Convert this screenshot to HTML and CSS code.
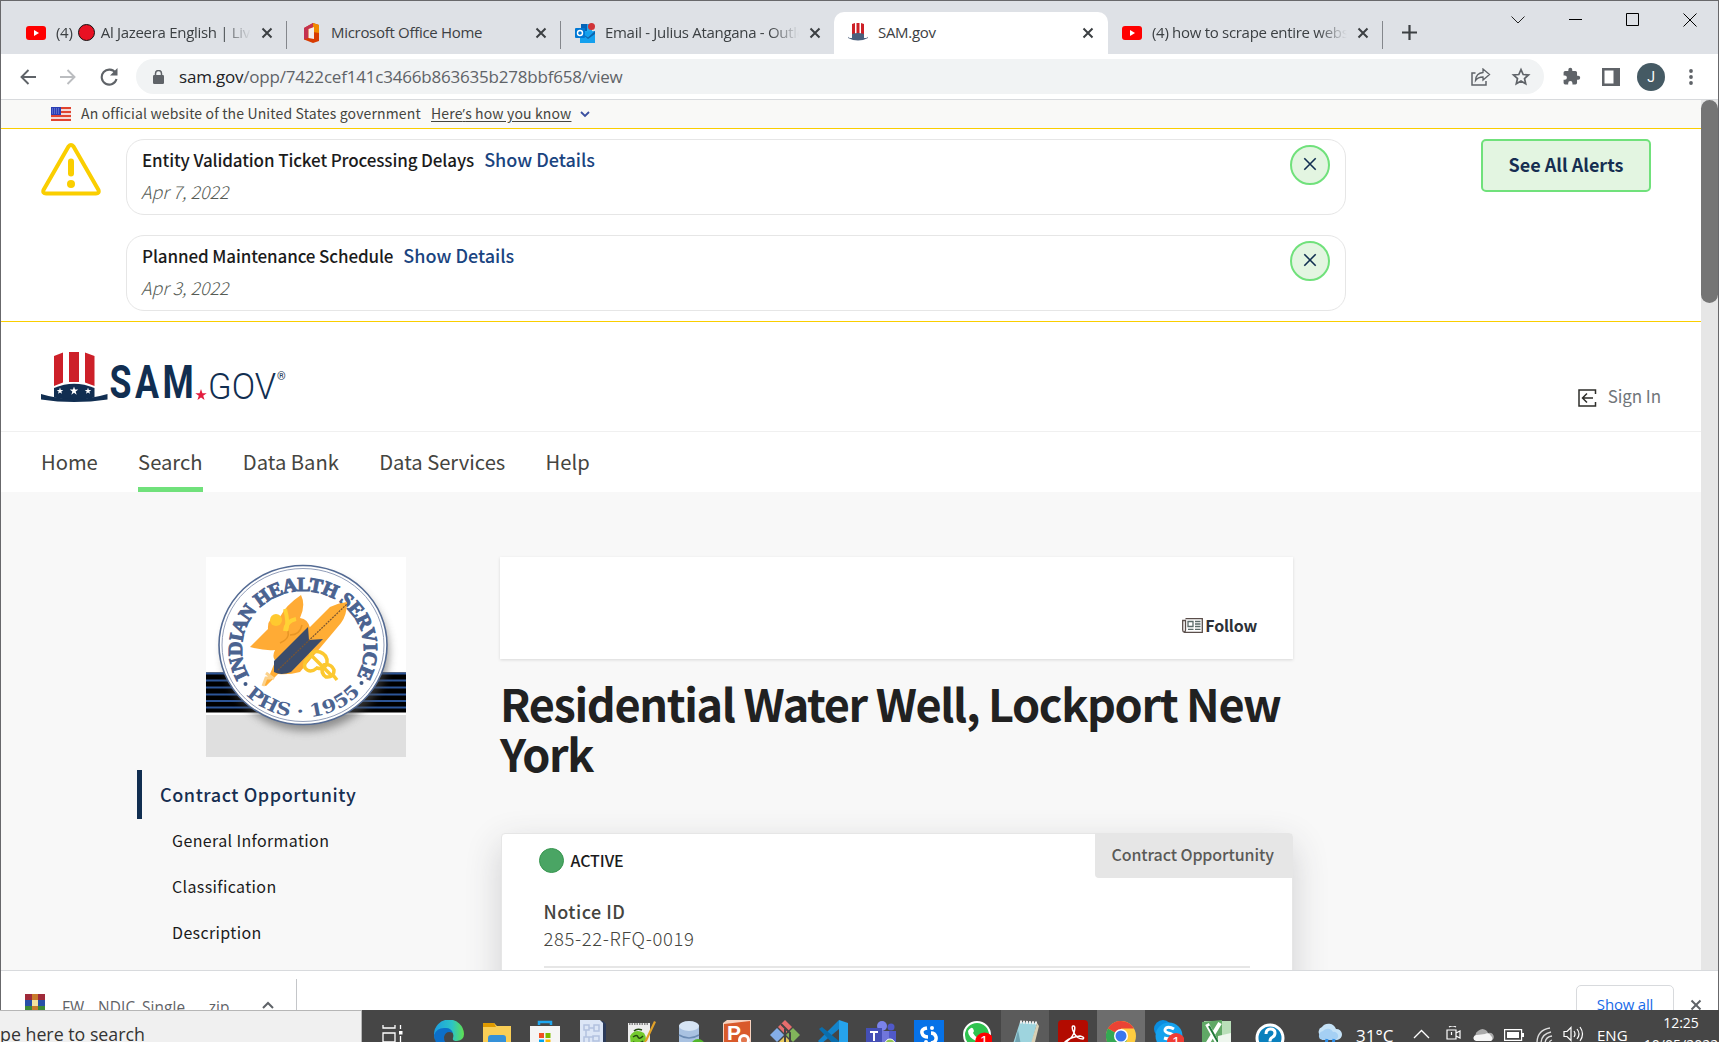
FILE: index.html
```html
<!DOCTYPE html>
<html lang="en">
<head>
<meta charset="utf-8">
<title>SAM.gov</title>
<link rel="stylesheet" href="styles.css">
</head>
<body>
<svg class="defs" width="0" height="0">
  <symbol id="x" viewBox="0 0 12 12"><path d="M1.5 1.5l9 9M10.5 1.5l-9 9" fill="none" stroke="currentColor" stroke-width="2"/></symbol>
  <symbol id="thinx" viewBox="0 0 14 14"><path d="M1.3 1.3l11.4 11.4M12.7 1.3L1.3 12.7" fill="none" stroke="currentColor" stroke-width="1.6"/></symbol>
  <symbol id="youtube" viewBox="0 0 20 14"><rect width="20" height="14" rx="3" fill="#f00"/><path d="M8 4l5 3-5 3z" fill="#fff"/></symbol>
  <symbol id="star" viewBox="-10 -10 20 20"><path d="M0-10l2.35 6.9h7.2L3.7 1.2l2.2 7-5.9-4.2-5.9 4.2 2.2-7-5.85-4.3h7.2z"/></symbol>
</svg>
<div class="window">
  <header class="tabs">
    <div class="tab first">
      <svg class="fav" width="20" height="14"><use href="#youtube"/></svg>
      <span class="tab-title faded">(4) <i class="live"></i> Al Jazeera English | Live</span>
      <svg class="close" width="12" height="12"><use href="#x"/></svg>
    </div>
    <div class="tab">
      <svg class="fav" width="20" height="20" viewBox="0 0 20 20"><path d="M12 0l6 2v16l-6 2-9-3.5V5z" fill="#d83b01"/><path d="M12 0l6 2v8l-6-1z" fill="#f08a00"/><path d="M3 5l9-5v4L7 6v9l-4 1.500z" fill="#c43150"/><path d="M7.500 6l5.500-2v12l-5.500-1z" fill="#f3eeee"/></svg>
      <span class="tab-title">Microsoft Office Home</span>
      <svg class="close" width="12" height="12"><use href="#x"/></svg>
    </div>
    <div class="tab">
      <svg class="fav" width="20" height="20" viewBox="0 0 20 20"><path d="M6 1h11v13H6z" fill="#28a8ea"/><path d="M6 1h6v7H6z" fill="#0364b8"/><path d="M5 9l15-1v12H5z" fill="#14a0ee"/><path d="M5 9l8 5.500L20 8v3l-7 5z" fill="#0a2767" opacity=".5"/><rect y="5" width="10" height="10" rx="1" fill="#0078d4"/><circle cx="5" cy="10" r="2.500" fill="none" stroke="#fff" stroke-width="1.400"/><circle cx="16.500" cy="3.500" r="3.500" fill="#d13438"/></svg>
      <span class="tab-title faded">Email - Julius Atangana - Outlook</span>
      <svg class="close" width="12" height="12"><use href="#x"/></svg>
    </div>
    <div class="tab active">
      <svg class="fav hat" width="20" height="18" viewBox="0 0 20 18"><path d="M4 1l3-1v11H4zM8.500 0h3v11h-3zM13 0l3 1v10h-3z" fill="#cd2026"/><path d="M4 11q6-2 12 0v4q4 0 4-1.500v1.500q-10 5-20 0v-1.500Q0 15 4 15z" fill="#4a5f7c"/></svg>
      <span class="tab-title">SAM.gov</span>
      <svg class="close" width="12" height="12"><use href="#x"/></svg>
    </div>
    <div class="tab last">
      <svg class="fav" width="20" height="14"><use href="#youtube"/></svg>
      <span class="tab-title faded">(4) how to scrape entire website</span>
      <svg class="close" width="12" height="12"><use href="#x"/></svg>
    </div>
    <svg class="plus" width="15" height="15" viewBox="0 0 15 15"><path d="M7.500 0v15M0 7.500h15" stroke="#3c4043" stroke-width="2.200"/></svg>
    <div class="controls">
      <svg width="14" height="8" viewBox="0 0 14 8"><path d="M.5.5L7 7 13.500.5" fill="none" stroke="#222"/></svg>
      <svg width="13" height="13" viewBox="0 0 13 13"><path d="M0 6.500h13" stroke="#000"/></svg>
      <svg width="13" height="13" viewBox="0 0 13 13"><path d="M.5.5h12v12H.5z" fill="none" stroke="#000"/></svg>
      <svg width="14" height="14" viewBox="0 0 14 14"><path d="M.5.5l13 13M13.500.5l-13 13" stroke="#000"/></svg>
    </div>
  </header>

  <div class="toolbar">
    <div class="nav-icons">
      <svg width="16" height="16" viewBox="0 0 16 16"><path d="M16 8H1.500M8.500 1l-7 7 7 7" fill="none" stroke="#5f6368" stroke-width="1.900"/></svg>
      <svg width="16" height="16" viewBox="0 0 16 16"><path d="M0 8h14.500M7.500 1l7 7-7 7" fill="none" stroke="#bbbdc0" stroke-width="1.900"/></svg>
      <svg width="18" height="18" viewBox="0 0 18 18"><path d="M15.500 5A7.500 7.500 0 1 0 16.500 11" fill="none" stroke="#5f6368" stroke-width="2.100"/><path d="M17.500 0v7.500H10z" fill="#5f6368"/></svg>
    </div>
    <div class="address">
      <svg width="11" height="14" viewBox="0 0 11 14"><rect y="5" width="11" height="9" rx="1.200" fill="#5f6368"/><path d="M2.500 6V3.500a3 3 0 0 1 6 0V6" fill="none" stroke="#5f6368" stroke-width="1.500"/></svg>
      <span class="url"><b>sam.gov</b>/opp/7422cef141c3466b863635b278bbf658/view</span>
      <svg class="share" width="20" height="18" viewBox="0 0 20 18"><path d="M4.500 5H1v12h14v-4" fill="none" stroke="#5f6368" stroke-width="1.500"/><path d="M12 1l6.500 5.500L12 12V9Q7 9 4.500 12.500 5 5 12 4.500z" fill="none" stroke="#5f6368" stroke-width="1.300"/></svg>
      <svg width="20" height="20" viewBox="-10 -10 20 20"><path d="M0-7.400l2.200 4.900 5.300.5-4 3.500 1.200 5.300L0 4-4.700 6.800l1.200-5.300-4-3.500 5.300-.5z" fill="none" stroke="#5f6368" stroke-width="1.700"/></svg>
    </div>
    <div class="actions">
      <svg class="ext" width="19" height="19" viewBox="0 0 24 24"><path d="M20.500 11H19V7a2 2 0 0 0-2-2h-4V3.500a2.500 2.500 0 0 0-5 0V5H4a2 2 0 0 0-2 2v3.800h1.500a2.700 2.700 0 0 1 0 5.400H2V20a2 2 0 0 0 2 2h3.800v-1.500a2.700 2.700 0 0 1 5.400 0V22H17a2 2 0 0 0 2-2v-4h1.500a2.500 2.500 0 0 0 0-5z" fill="#5f6368"/></svg>
      <svg class="panel" width="18" height="18" viewBox="0 0 18 18"><path d="M0 0h18v18H0zM2.500 2.500v13h9v-13z" fill="#5f6368" fill-rule="evenodd"/></svg>
      <span class="avatar">J</span>
      <svg class="dots" width="4" height="16" viewBox="0 0 4 16"><circle cx="2" cy="2" r="1.900" fill="#5f6368"/><circle cx="2" cy="8" r="1.900" fill="#5f6368"/><circle cx="2" cy="14" r="1.900" fill="#5f6368"/></svg>
    </div>
  </div>

  <div class="viewport">
    <div class="page">
      <div class="gov">
        <svg width="20" height="14" viewBox="0 0 20 14"><rect width="20" height="14" fill="#f6d9d5"/><path d="M0 1h20M0 5h20M0 9h20M0 13h20" stroke="#e0442f" stroke-width="2"/><rect width="10" height="8" fill="#2b3fb5"/><path d="M1 2h8M1 4h8M1 6h8" stroke="#a9b4ec" stroke-width=".8" stroke-dasharray="1 1"/></svg>
        <span class="gov-text">An official website of the United States government</span>
        <a class="gov-link">Here<span class="apos">’</span>s how you know</a>
        <svg width="10" height="7" viewBox="0 0 10 7"><path d="M1 1l4 4 4-4" fill="none" stroke="#3a4fa0" stroke-width="1.800"/></svg>
      </div>
      <section class="alerts">
        <svg class="warn" width="60" height="53" viewBox="0 0 60 53"><path d="M27.500 3.500Q30 .5 32.500 3.500L57.500 47q1 3.500-2.500 3.500H5Q1.500 50.500 2.500 47z" fill="none" stroke="#face00" stroke-width="4" stroke-linejoin="round"/><path d="M30 18.500v12" stroke="#face00" stroke-width="6" stroke-linecap="round"/><circle cx="30" cy="41" r="4" fill="#face00"/></svg>
        <div class="alert-list">
          <article class="alert">
            <div><p class="alert-title"><span>Entity Validation Ticket Processing Delays</span><a>Show Details</a></p><p class="date">Apr 7, 2022</p></div>
            <span class="dismiss"><svg width="14" height="14"><use href="#thinx"/></svg></span>
          </article>
          <article class="alert">
            <div><p class="alert-title"><span>Planned Maintenance Schedule</span><a>Show Details</a></p><p class="date">Apr 3, 2022</p></div>
            <span class="dismiss"><svg width="14" height="14"><use href="#thinx"/></svg></span>
          </article>
        </div>
        <a class="see-all">See All Alerts</a>
      </section>
      <div class="brand">
        <svg class="logo" width="248" height="52" viewBox="0 0 248 52">
          <path d="M13 4l9-3.500v30L13 34zM28 0h10v30H28zM44 .5L53.500 4v30L44 30.500z" fill="#cd2029"/>
          <path d="M13 36q20-8.500 40.500 0v9.500Q33 50 13 45.500z" fill="#112e51"/>
          <path d="M0 42q33 10 66.500 0v5.500q-33.500 5-66.500 0z" fill="#112e51"/>
          <g fill="#fff"><use href="#star" x="15.500" y="35.500" width="7" height="7"/><use href="#star" x="28.500" y="34.500" width="9" height="9"/><use href="#star" x="43.500" y="35.500" width="7" height="7"/></g>
          <text class="logo-bold" transform="translate(68.500 46) scale(.76 1)" textLength="111">SAM</text>
          <use href="#star" x="154" y="37" width="12" height="12" fill="#e31c3d"/>
          <text class="logo-thin" x="167" y="46.500" textLength="68" lengthAdjust="spacingAndGlyphs">GOV</text>
          <text class="logo-r" x="236" y="28">®</text>
        </svg>
        <a class="sign-in"><svg width="19" height="18" viewBox="0 0 19 18"><path d="M17.500 5V1H1v16h16.500v-4M15 9H5M9 4.500L4.500 9 9 13.500" fill="none" stroke="#2e2e2a" stroke-width="1.500"/></svg><span>Sign In</span></a>
      </div>
      <nav class="menu">
        <a>Home</a><a class="current">Search</a><a>Data Bank</a><a>Data Services</a><a>Help</a>
      </nav>
      <main class="content">
        <aside class="side">
          <svg class="seal" width="200" height="200" viewBox="0 0 200 200">
            <defs>
              <path id="arc-top" d="M43 119A61 58 0 1 1 151 119"/>
              <path id="arc-bottom" d="M40 138A78 73 0 0 0 158 132"/>
              <filter id="soft" x="-20%" y="-20%" width="140%" height="140%"><feGaussianBlur stdDeviation="4"/></filter>
            </defs>
            <rect width="200" height="200" fill="#fff"/>
            <rect y="115.500" width="200" height="40" fill="#000"/>
            <path d="M0 116.500h200M0 123.500h200M0 130.500h200M0 137.500h200M0 144h200M0 150.500h200" stroke="#2c5597" stroke-width="2"/>
            <rect y="158" width="200" height="42" fill="#dfdfdf"/>
            <ellipse cx="100" cy="95" rx="83" ry="79" fill="#555" opacity=".6" filter="url(#soft)"/>
            <ellipse cx="97" cy="88" rx="84" ry="79.500" fill="#fff" stroke="#536a93" stroke-width="1.600"/>
            <ellipse cx="97" cy="88" rx="81" ry="76.500" fill="none" stroke="#8492b0" stroke-width=".9"/>
            <text class="seal-top"><textPath href="#arc-top">INDIAN HEALTH SERVICE</textPath></text>
            <text class="seal-bottom"><textPath href="#arc-bottom" textLength="127" lengthAdjust="spacingAndGlyphs">PHS · 1955</textPath></text>
            <circle cx="39.500" cy="127" r="2" fill="#405a87"/><circle cx="155.500" cy="126" r="2" fill="#405a87"/>
            <path d="M44 90Q54 80 62 72q-1-13 12-12Q80 48 95 38q5 10-1 23 8 1 10 10l-33 34q-6-4-2-12Q58 94 44 90z" fill="#ffab35"/>
            <circle cx="70" cy="63" r="6" fill="#ffc92f"/>
            <path d="M79 52q4 14 1 22M90 62q-10 2-11 12" fill="none" stroke="#ffd235" stroke-width="4"/>
            <path d="M74 86q10-4 8-12M84 78q10 0 12-10" fill="none" stroke="#e79525" stroke-width="1.500"/>
            <path d="M69 105L124 50q8-4 17-5 0 13-6 21l-41 49q-11 3-22 2l-12 12-3-1 7-11z" fill="#ffad34"/>
            <path d="M68 104l34-34 1 13 14-1-32 33q-10 4-17 0z" fill="#3b4c6b"/>
            <path d="M72 113L141 47" stroke="#7a5530" stroke-width="1.200" stroke-dasharray="2 1"/>
            <path d="M99 111q-2-7 5-11 2-7 10-5 8 3 7 11-2 7-10 5-7 6-12 0zM117 108q8-2 11 5 0 8-8 7-6-4-3-12M127 118l4 5M105 98l20 20" fill="none" stroke="#fcc831" stroke-width="3.500"/>
            <path d="M57 129l3-8h5M60 116l8 6" fill="none" stroke="#fcd28b" stroke-width="3"/>
          </svg>
          <a class="side-main">Contract Opportunity</a>
          <a class="side-link">General Information</a>
          <a class="side-link">Classification</a>
          <a class="side-link">Description</a>
        </aside>
        <section class="main">
          <div class="follow-bar"><a class="follow"><svg width="21" height="15" viewBox="0 0 21 15"><path d="M3.500.7h16.800v13.600H2.500Q.7 14 .7 12V2.500h2.800V12q0 2-1.500 2" fill="none" stroke="#5a4e4a" stroke-width="1.300"/><path d="M6 3.500h5v5H6zM13 3.500h5.500M13 6h5.500M13 8.500h5.500M6 11.300h5.500M13 11.300h5.500" fill="none" stroke="#5a6a68" stroke-width="1.300"/></svg><span>Follow</span></a></div>
          <h1>Residential Water Well, Lockport New York</h1>
          <div class="card">
            <div class="card-top"><span class="status"><i></i><b>ACTIVE</b></span><span class="tag">Contract Opportunity</span></div>
            <dl><dt>Notice ID</dt><dd>285-22-RFQ-0019</dd></dl>
          </div>
        </section>
      </main>
    </div>
    <div class="scrollbar"><div class="thumb"></div></div>
  </div>

  <div class="downloads">
    <div class="file">
      <svg width="20" height="20" viewBox="0 0 20 20"><path d="M0 0h20v6H0z" fill="#a02a3a"/><path d="M0 6h20v6H0z" fill="#2850a8"/><path d="M0 12h20v6H0z" fill="#3d8a36"/><path d="M7 0h6v18H7z" fill="#c97b2c"/><path d="M7 6h6v6H7z" fill="#f3e3a0"/></svg>
      <span class="file-name">FW__NDIC_Single_....zip</span>
      <svg width="12" height="8" viewBox="0 0 12 8"><path d="M1 7l5-5 5 5" fill="none" stroke="#5f6368" stroke-width="2"/></svg>
    </div>
    <a class="show-all">Show all</a>
    <svg class="dl-close" width="12" height="12"><use href="#x"/></svg>
  </div>
</div>

<footer class="taskbar">
  <div class="search">pe here to search</div>
  <div class="view"><svg width="22" height="28" viewBox="0 0 22 28"><path d="M1 5v3h12V5M1 13h12v9H1zM1 27v-3h12v3M18.500 5v4M18.500 16v8" fill="none" stroke="#fff" stroke-width="1.300"/><path d="M17 11h3.500v3.500H17z" fill="#fff"/></svg></div>
  <div class="apps">
    <span><svg viewBox="0 0 30 30"><defs><linearGradient id="edge" x1="0" y1="0" x2="1" y2="0"><stop stop-color="#1b9de2"/><stop offset=".6" stop-color="#2cc3c6"/><stop offset="1" stop-color="#5fe04f"/></linearGradient></defs><path d="M0 15a15 15 0 0 1 30-1q0 6-7 7-5 0-4-3 2-7-6-7Q3 12 1 20z" fill="url(#edge)"/><path d="M0 15q3-8 12-7 5 0 7 5-7-3-9 4 0 8 9 12Q2 32 0 15z" fill="#0c6fc9"/></svg></span>
    <span><svg viewBox="0 0 30 30"><path d="M1 3h11l3 3h14v24H1z" fill="#f9ce56"/><path d="M1 3h11l2 4H1z" fill="#e09a00"/><path d="M6 30V18q0-3 3-3h12q3 0 3 3v12h-5v-8h-8v8z" fill="#3591d8"/></svg></span>
    <span><svg viewBox="0 0 30 30"><path d="M9 5V2h12v3" fill="none" stroke="#1fa7f0" stroke-width="2.500"/><path d="M0 6h30v24H0z" fill="#f5f5f5"/><path d="M9 13h5v5H9z" fill="#f25022"/><path d="M15.500 13h5v5h-5z" fill="#7fba00"/><path d="M9 19.500h5v5H9z" fill="#00a4ef"/><path d="M15.500 19.500h5v5h-5z" fill="#ffb900"/></svg></span>
    <span><svg viewBox="0 0 30 30"><path d="M3 1h22l3 3v26H3z" fill="#2b3a59"/><path d="M2 0h20l3 3v27H2z" fill="#dce6f6"/><path d="M6 5h5v5H6zM16 5h5v6h-5zM11 8h5M8 10v7h8M6 17h5v7H6zM15 16h6v5h-6z" fill="none" stroke="#b3c2e0" stroke-width="1.500"/><circle cx="25" cy="26" r="4" fill="#4a78bd"/></svg></span>
    <span><svg viewBox="0 0 30 30"><path d="M2 3h22v27H2z" fill="#eee"/><path d="M3 4h20" stroke="#888" stroke-width="2" stroke-dasharray="1.500 1"/><path d="M4 16q5-8 14-3 4 6 0 13H5z" fill="#73c92d"/><path d="M8 11q3-3 8-1M7 17q4-3 5 0t5-1M7 22q5 3 10-1" fill="none" stroke="#244812" stroke-width="1.500"/><path d="M28 1l-9 19-2 4 4-3 9-19z" fill="#e0a129"/></svg></span>
    <span><svg viewBox="0 0 30 30"><path d="M5 5v25h20V5z" fill="#a9c2e1"/><ellipse cx="15" cy="6" rx="10" ry="5" fill="#d7e5f4"/><path d="M5 15q10 6 20 0M5 24q10 6 20 0" fill="none" stroke="#6c8cb4" stroke-width="1.500"/><circle cx="24" cy="26" r="7" fill="#53b72b"/><path d="M22 22l6 4-6 4z" fill="#fff"/></svg></span>
    <span><svg viewBox="0 0 30 30"><path d="M5 0h24v30H1V3z" fill="#f7d2bf"/><path d="M2 4L28 1v29H2z" fill="#d95a2b"/><text class="ppt" x="5" y="20">P</text><circle cx="22" cy="20" r="6" fill="#fff"/><circle cx="22" cy="20" r="3" fill="#e2764d"/></svg></span>
    <span><svg viewBox="0 0 30 30"><path d="M15 0l7 7-7 7-7-7z" fill="#e86d6d"/><path d="M7 8l7 7-7 7-7-7z" fill="#84aee8"/><path d="M23 8l7 7-7 7-7-7z" fill="#82b45b"/><path d="M15 16l7 7-7 7-7-7z" fill="#e8c95a"/><path d="M11 4l9 9v9M15 9v13" fill="none" stroke="#444" stroke-width="2"/></svg></span>
    <span><svg viewBox="0 0 30 30"><path d="M21 0l9 3v24l-9 3z" fill="#26a3ec"/><path d="M21 9L3 24l-3-3L21 0z" fill="#1384cc"/><path d="M21 21L4 7 1 9l20 21z" fill="#0a6ead"/></svg></span>
    <span><svg viewBox="0 0 30 30"><circle cx="16" cy="6" r="5" fill="#7b83eb"/><circle cx="25" cy="7" r="3.500" fill="#5059c9"/><path d="M9 11h15v19H9z" fill="#7076db"/><path d="M23 11h7v15h-7z" fill="#5059c9"/><path d="M0 8h16v16H0z" fill="#444fb5"/><path d="M4 12h8M8 12v9" stroke="#fff" stroke-width="2"/><circle cx="24" cy="24" r="5" fill="#92c353" stroke="#fff"/></svg></span>
    <span><svg viewBox="0 0 30 30"><path d="M0 0h30v30H0z" fill="#0672e8"/><path d="M13 8q-6 1-5 5 1 4 6 4M17 23q6-1 5-6-1-4-5-4" fill="none" stroke="#fff" stroke-width="3.500"/><circle cx="18" cy="8" r="2" fill="#fff"/><circle cx="12" cy="22" r="2" fill="#fff"/></svg></span>
    <span><svg viewBox="0 0 30 30"><circle cx="15" cy="15" r="13" fill="#2fc34f" stroke="#fff" stroke-width="2"/><path d="M9 8q2-1 3 3l-1 2q2 4 5 5l2-2q4 2 3 3-2 4-7 2-8-4-8-10 1-2 3-3z" fill="#fff"/><circle cx="22.500" cy="22" r="9.500" fill="#f00"/><text class="badge" x="18" y="26">1</text></svg></span>
    <span class="open"><svg viewBox="0 0 30 30"><path d="M10 2l17 1-7 27H1z" fill="#9ed4de"/><path d="M10 2l17 1" stroke="#eee" stroke-width="3" stroke-dasharray="2 1"/><path d="M27 3l2 3-6 24h-4z" fill="#d9d0b5"/><path d="M8 10l-5 20h9z" fill="#6fa3b1"/></svg></span>
    <span><svg viewBox="0 0 30 30"><rect width="30" height="34" rx="4" fill="#b30b00"/><path d="M6 23q7-3 10-10 2-8-1-7-2 1 1 7 3 6 9 6 2-2-3-3-9 1-14 5-3 3-2 2z" fill="none" stroke="#fff" stroke-width="1.500"/></svg></span>
    <span class="focused"><svg viewBox="0 0 30 30"><circle cx="15" cy="16" r="15" fill="#ffcd40"/><path d="M15 16L2 8.500A15 15 0 0 1 28 8.500H15z" fill="#ea4335"/><path d="M2 8.500A15 15 0 0 0 15 31l6-11-6-4z" fill="#34a853"/><path d="M2 8.500Q7 1 15 1v8z" fill="#ea4335"/><circle cx="15" cy="16" r="7" fill="#fff"/><circle cx="15" cy="16" r="5.500" fill="#3a76ef"/></svg></span>
    <span><svg viewBox="0 0 30 30"><circle cx="9" cy="9" r="9" fill="#0a8de0"/><circle cx="15" cy="16" r="13.500" fill="#16a2ee"/><path d="M20 9q-5-3-8-1-3 3 2 5 6 1 5 4-3 3-9 1" fill="none" stroke="#fff" stroke-width="3"/><circle cx="22" cy="22" r="9" fill="#f03c34"/><text class="badge" x="18" y="27">1</text></svg></span>
    <span><svg viewBox="0 0 30 30"><path d="M2 1h27v29H2z" fill="#b9dfb9"/><path d="M0 2l20-2v30H0z" fill="#60a866"/><path d="M5 4l12 22M18 3L4 26" stroke="#fff" stroke-width="4"/><path d="M7 6l10 18" stroke="#207a39" stroke-width="2"/><path d="M16 16l13-3v17H16z" fill="#eef6ee"/></svg></span>
    <span class="help"><svg viewBox="0 0 30 30"><circle cx="15" cy="18" r="13" fill="#0a80bd" stroke="#fff" stroke-width="3"/><path d="M11 14q0-5 4.500-5t4.500 4q0 3-3 4.500-2 1-2 4" fill="none" stroke="#fff" stroke-width="3"/></svg></span>
  </div>
  <div class="tray">
    <svg class="weather" width="27" height="26" viewBox="0 0 27 26"><path d="M5 14a5 5 0 0 1 1-9 8 8 0 0 1 14 2 5 5 0 0 1 1 11H6z" fill="#c5e2f7"/><path d="M4 17a5 5 0 0 1 3-8 6 6 0 0 1 10 1 4 4 0 0 1 2 8H7z" fill="#a5d0f4"/><path d="M11 17l-1 5M18 17l-1 5" stroke="#2f8fe8" stroke-width="3"/></svg>
    <span class="temp">31°C</span>
    <svg class="up" width="17" height="10" viewBox="0 0 17 10"><path d="M1 9l7.500-7.500L16 9" fill="none" stroke="#fff" stroke-width="1.300"/></svg>
    <svg class="cam" width="15" height="15" viewBox="0 0 15 15"><path d="M3 1q3.500-2 7 0M1 4h9v9H1zM10 7l4-2v7l-4-2M5.500 6v3" fill="none" stroke="#fff" stroke-width="1.200"/></svg>
    <svg class="cloud" width="21" height="14" viewBox="0 0 21 14"><path d="M4 11a5 5 0 0 1 1-8 6 6 0 0 1 10 2 4 4 0 0 1 3 8z" fill="#aaa"/><path d="M3 13a3 3 0 0 1 1-6l8-1a4 4 0 0 1 6 2 3 3 0 0 1 0 5z" fill="#f5f5f5"/></svg>
    <svg class="battery" width="20" height="12" viewBox="0 0 20 12"><path d="M.6.6h17v10.800H.6z" fill="none" stroke="#fff" stroke-width="1.200"/><path d="M3 3h12v6H3zM18 4h2v4h-2z" fill="#fff"/></svg>
    <svg class="wifi" width="17" height="17" viewBox="0 0 17 17"><path d="M1 16Q1 3 14 1M5 17Q5 7 15 5M9 17q0-7 7-8M13 17q0-3 3-4" fill="none" stroke="#ddd" stroke-width="1.300"/></svg>
    <svg class="volume" width="22" height="16" viewBox="0 0 22 16"><path d="M1 5.500h3l4-4v13l-4-4H1zM11 5q2 3 0 6M14 3q4 5 0 10M17 1q5 7 0 14" fill="none" stroke="#fff" stroke-width="1.200"/></svg>
    <span class="lang">ENG</span>
    <span class="clock"><span>12:25</span><span>10/05/2022</span></span>
  </div>
</footer>
</body>
</html>
```
FILE: styles.css
```css
* { box-sizing: border-box; margin: 0; padding: 0; }
body { width: 1719px; height: 1042px; overflow: hidden; display: flex; flex-direction: column; background: #fff; font-family: "Noto Sans CJK SC", sans-serif; }
.defs { position: absolute; }
svg { display: block; flex: none; }
i { font-style: normal; }
span, a { white-space: nowrap; }

/* browser window */
.window { height: 1010px; flex: none; display: flex; flex-direction: column; border: 1px solid #68686b; border-bottom: 0; overflow: hidden; }
.tabs, .toolbar, .downloads, .taskbar { font-family: "Open Sans", sans-serif; }
.tabs { height: 53px; flex: none; display: flex; background: #dee1e6; padding: 11px 0 0 12px; }
.tab { width: 274px; height: 42px; flex: none; display: flex; align-items: center; padding: 0 14px 1px; color: #3c4043; font-size: 15px; letter-spacing: -.3px; position: relative; }
.tab::after { content: ""; position: absolute; right: 0; top: 9px; width: 1px; height: 28px; background: #84878c; }
.tab .fav { margin-right: 10px; }
.tab.first { padding-left: 13px; }
.tab.last { padding-left: 13px; }
.tab.active { background: #fff; border-radius: 10px 10px 0 0; margin: 0 1px 0 -1px; }
.tab.active .hat { margin-top: -2px; }
.tab.active::after, .tab:nth-child(3)::after { display: none; }
.tab-title { flex: 1; overflow: hidden; line-height: 26px; padding-bottom: 1px; }
.faded { -webkit-mask-image: linear-gradient(90deg, #000 85%, transparent); mask-image: linear-gradient(90deg, #000 85%, transparent); }
.close { color: #3c4043; margin-left: 10px; }
.live { display: inline-block; width: 17px; height: 17px; border-radius: 50%; background: #e81123; border: 1px solid #111; vertical-align: -3px; margin: 0 2px; }
.plus { margin: 13px 0 0 19px; }
.controls { display: flex; margin-left: auto; gap: 44px; height: 17px; align-items: center; padding: 0 21px 0 0; margin-top: -1px; }

.toolbar { height: 46px; flex: none; display: flex; border-bottom: 1px solid #d8dadd; align-items: center; padding: 0 0 0 19px; }
.nav-icons { display: flex; gap: 24px; width: 116px; align-items: center; }
.address { width: 1408px; height: 35px; border-radius: 18px; background: #f1f3f4; display: flex; align-items: center; padding: 0 13px 0 17px; }
.url { margin-left: 15px; flex: 1; color: #5f6368; font-size: 17px; letter-spacing: -.2px; line-height: 30px; }
.url b { font-weight: 400; color: #202124; }
.share { margin-right: 20px; }
.actions { display: flex; align-items: center; }
.ext { margin-left: 18px; }
.panel { margin-left: 21px; }
.dots { margin-left: 24px; }
.avatar { margin-left: 17px; width: 28px; height: 28px; border-radius: 50%; background: #455a64; color: #fff; text-align: center; font: 14px/28px Roboto, sans-serif; }

/* web page */
.viewport { height: 870px; flex: none; display: flex; }
.page { flex: 1; overflow: hidden; }
.scrollbar { width: 17px; background: #e6e6e6; }
.thumb { height: 203px; border-radius: 9px; background: #757575; }
.gov { height: 29px; background: #f9f9f7; border-bottom: 1px solid #face00; display: flex; align-items: center; padding-left: 50px; font-size: 14px; line-height: 26px; color: #454540; letter-spacing: .15px; }
.gov-text { margin-left: 10px; width: 350px; }
.gov-text, .gov-link { padding-bottom: 2px; }
.gov-link { text-decoration: underline; text-underline-offset: 2px; width: 149px; }
.apos { font-family: "Open Sans", sans-serif; }
.alerts { height: 193px; border-bottom: 1px solid #face00; display: flex; padding: 10px 0 0 40px; }
.warn { margin: 4px 25px 0 0; }
.alert-list { display: flex; flex-direction: column; gap: 20px; }
.alert { width: 1220px; height: 76px; border: 1px solid #e6e6e6; border-radius: 18px; display: flex; justify-content: space-between; padding: 5px 15px 0; }
.alert-title { display: flex; gap: 10px; line-height: 30px; font-size: 17px; font-weight: 500; color: #1b1b1b; letter-spacing: -.12px; }
.alert-title a { color: #1a4480; font-weight: 500; line-height: 29px; font-size: 18px; letter-spacing: 0; }
.date { font-style: italic; font-size: 17.800px; line-height: 32px; font-weight: 300; color: #565c55; margin-left: -1px; }
.dismiss { width: 40px; height: 40px; border: 2px solid #70e17b; border-radius: 50%; background: #e3f5e1; color: #112e51; display: flex; justify-content: center; padding-top: 10px; }
.see-all { margin-left: 135px; width: 170px; height: 53px; border: 2px solid #70e17b; border-radius: 5px; background: #e3f5e1; color: #162e51; font-weight: 700; font-size: 18px; line-height: 47px; text-align: center; }
.brand { height: 110px; display: flex; justify-content: space-between; border-bottom: 1px solid #f0f0f0; padding: 30px 40px 0 40px; }
.logo-bold { font: 700 47px "Roboto", sans-serif; fill: #112e51; }
.logo-thin { font: 300 37px "Roboto", sans-serif; fill: #112e51; }
.logo-r { font: 11px "Roboto", sans-serif; fill: #112e51; }
.sign-in { display: flex; gap: 11px; align-items: center; height: 30px; margin-top: 30px; font-size: 17px; letter-spacing: -.1px; color: #71767a; }
.sign-in span { padding-bottom: 3px; }
.sign-in svg { margin-top: 2px; }
.menu { height: 60px; display: flex; gap: 40.300px; padding-left: 40px; font-size: 20.200px; line-height: 59px; color: #454540; }
.current { border-bottom: 5px solid #70e17b; }
.content { display: flex; background: #f8f8f8; height: 600px; padding: 65px 0 0 136px; }
.side { width: 363px; display: flex; flex-direction: column; }
.seal { margin-left: 69px; }
.seal-top { font: 700 20px "Liberation Serif", serif; letter-spacing: -.6px; fill: #4b6390; stroke: #4b6390; stroke-width: 1; }
.seal-bottom { font: 700 18px "DejaVu Serif", serif; fill: #4b6390; }
.side-main { margin-top: 13px; height: 49px; border-left: 5px solid #112e51; padding-left: 18px; font-size: 18px; letter-spacing: .57px; font-weight: 500; line-height: 48px; color: #162e51; margin-bottom: -2px; }
.side-link { padding-left: 35px; height: 46px; line-height: 46px; font-size: 16px; letter-spacing: .37px; color: #1b1b1b; }
.main { width: 793px; }
.follow-bar { height: 102px; background: #fff; box-shadow: 0 1px 3px rgba(0,0,0,.13); display: flex; justify-content: flex-end; padding: 55px 36px 0 0; }
.follow { display: flex; gap: 2px; height: 28px; font-size: 16px; letter-spacing: -.2px; font-weight: 700; line-height: 27px; color: #2d3138; }
.follow svg { margin-top: 6px; }
h1 { margin-top: 19px; font-size: 45px; letter-spacing: -1.360px; line-height: 50px; font-weight: 700; color: #212121; }
.card { margin: 55px .5px 0; height: 300px; background: #fff; border: 1px solid #e6e6e6; border-radius: 4px; box-shadow: 0 12px 36px rgba(50,50,60,.2); }
.card-top { display: flex; justify-content: space-between; height: 57px; }
.status { display: flex; gap: 7px; height: 52px; align-items: center; padding-left: 37px; }
.status b { font-size: 16px; font-weight: 500; color: #1b1b1b; padding-bottom: 1px; letter-spacing: -.1px; }
.status i { width: 25px; height: 25px; border-radius: 50%; background: #4aa564; border: 1px solid #37964f; }
.tag { width: 197px; height: 44px; background: #e6e6e6; border-radius: 0 0 0 4px; padding-left: 17px; font-size: 16px; letter-spacing: -.1px; font-weight: 500; line-height: 40px; color: #5a5a57; }
dl { padding: 6px 42px 0; }
dt { font-size: 18px; letter-spacing: .5px; font-weight: 500; line-height: 28px; color: #454540; }
dd { font-size: 18.500px; letter-spacing: .6px; font-weight: 300; line-height: 27px; color: #454540; height: 43px; border-bottom: 2px solid #e6e6e6; }

/* download shelf */
.downloads { height: 40px; flex: none; border-top: 1px solid #d8dadd; display: flex; background: #fff; }
.file { width: 296px; height: 60px; margin-top: 8px; border-right: 1px solid #c4c6c9; display: flex; padding: 15px 0 0 24px; }
.file-name { width: 200px; margin-left: 17px; font-size: 15.400px; letter-spacing: .1px; line-height: 27px; color: #5f6368; }
.file svg:last-child { margin-top: 7px; }
.show-all { margin: 14px 16px 0 auto; width: 98px; height: 42px; border: 1px solid #d8dadd; border-radius: 5px; color: #1a6be8; font-size: 15px; letter-spacing: -.2px; line-height: 36px; text-align: center; }
.dl-close { margin: 28px 16px 0 0; color: #5f6368; }

/* desktop taskbar */
.taskbar { height: 32px; flex: none; background: #464646; display: flex; overflow: hidden; color: #fff; }
.search { width: 362px; height: 40px; flex: none; background: #f0f0f0; border: 1px solid #b6b6b6; border-left: 0; color: #333; font-size: 17.800px; line-height: 47px; }
.view { width: 63px; padding: 10px 0 0 20px; flex: none; }
.apps { display: flex; flex: none; }
.apps span { width: 48px; height: 48px; padding: 10px 9px; }
.apps span svg { width: 30px; height: 30px; }
.apps .open { background: #5b5b5b; }
.apps .focused { background: #6d6d6d; }
.apps .help { margin-left: 5px; }
.ppt { font: 700 21px "Liberation Sans", sans-serif; fill: #fff; }
.badge { font: 15px "Liberation Sans", sans-serif; fill: #fff; }
.tray { display: flex; flex: 1; padding-left: 23px; height: 50px; }
.weather { margin: 12px 13px 0 -1px; }
.temp { width: 57px; font-size: 17px; line-height: 51px; }
.up { margin-top: 19px; }
.cam { margin: 16px 0 0 16px; }
.cloud { margin: 18px 0 0 12px; }
.battery { margin: 19px 0 0 10px; }
.wifi { margin: 17px 0 0 12px; }
.volume { margin: 16px 0 0 10px; }
.lang { width: 46px; margin-left: 12px; font-size: 15px; line-height: 50px; }
.clock { display: flex; flex-direction: column; align-items: center; font-size: 14px; line-height: 22px; padding-top: 2px; width: 76px; }
```
